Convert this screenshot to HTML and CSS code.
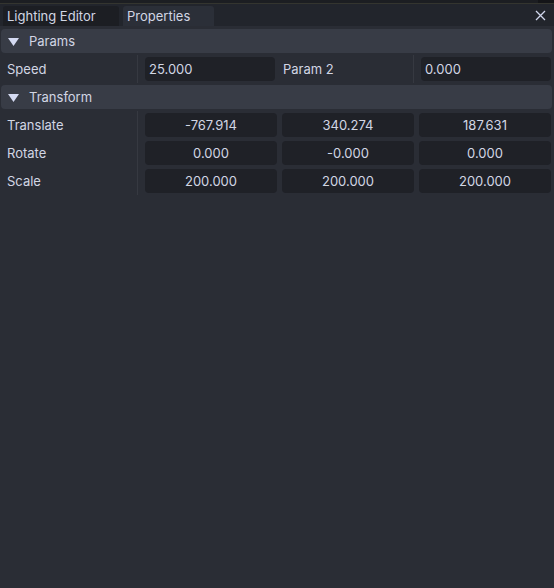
FILE: index.html
```html
<!DOCTYPE html>
<html>
<head>
<meta charset="utf-8">
<link rel="stylesheet" href="styles.css">
</head>
<body>
<div class="window">
  <div class="topstrip"><div class="topblock"></div></div>
  <div class="tabbar">
    <div class="tab tab-inactive">Lighting Editor</div>
    <div class="tab tab-active">Properties</div>
    <div class="close">
      <svg width="11" height="11" viewBox="0 0 11 11"><path d="M1 1 L10 10 M10 1 L1 10" stroke="#d0d6ec" stroke-width="1.3" fill="none"/></svg>
    </div>
  </div>
  <div class="content">
    <div class="header">
      <svg class="tri" width="11" height="8" viewBox="0 0 11 8"><polygon points="0,0 11,0 5.5,8" fill="#d4daf2"/></svg>
      <span>Params</span>
    </div>
    <div class="group">
      <div class="row">
        <div class="label">Speed</div>
        <div class="input input-left input-speed">25.000</div>
        <div class="label label2">Param 2</div>
        <div class="input input-left input-fill">0.000</div>
      </div>
    </div>
    <div class="header">
      <svg class="tri" width="11" height="8" viewBox="0 0 11 8"><polygon points="0,0 11,0 5.5,8" fill="#d4daf2"/></svg>
      <span>Transform</span>
    </div>
    <div class="group">
      <div class="row">
        <div class="label">Translate</div>
        <div class="triple">
          <div class="input">-767.914</div>
          <div class="input">340.274</div>
          <div class="input">187.631</div>
        </div>
      </div>
      <div class="row">
        <div class="label">Rotate</div>
        <div class="triple">
          <div class="input">0.000</div>
          <div class="input">-0.000</div>
          <div class="input">0.000</div>
        </div>
      </div>
      <div class="row">
        <div class="label">Scale</div>
        <div class="triple">
          <div class="input">200.000</div>
          <div class="input">200.000</div>
          <div class="input">200.000</div>
        </div>
      </div>
    </div>
  </div>
</div>
</body>
</html>
```
FILE: styles.css
```css
html, body {
  margin: 0;
  padding: 0;
  height: 100%;
}
body {
  background: #2a2d35;
  font-family: Inter, "Noto Sans", sans-serif;
  font-size: 13px;
  color: #d2d6e4;
}
.window {
  display: flex;
  flex-direction: column;
  height: 100%;
}
.topstrip {
  height: 3px;
  background: #1c1e22;
  border-bottom: 1px solid #34352f;
  display: flex;
  justify-content: flex-end;
}
.topblock {
  width: 16px;
  background: #141518;
}
.tabbar {
  height: 22px;
  background: #22252c;
  display: flex;
  align-items: flex-end;
  padding-left: 3px;
  gap: 4px;
}
.tab {
  height: 20px;
  line-height: 20px;
  padding-left: 4px;
  box-sizing: border-box;
  border-radius: 3px 3px 0 0;
  white-space: nowrap;
}
.tab-inactive {
  width: 116px;
  background: #1c1e23;
}
.tab-active {
  width: 91px;
  background: #2b2f38;
}
.close {
  margin-left: auto;
  margin-right: 8px;
  align-self: center;
  height: 11px;
  width: 11px;
  margin-top: 1px;
}
.close svg {
  display: block;
}
.content {
  padding: 3px 2px 0 1px;
  display: flex;
  flex-direction: column;
}
.header {
  height: 24px;
  background: #383c46;
  border-radius: 4px;
  display: flex;
  align-items: center;
  padding-left: 7px;
}
.tri {
  display: block;
  margin-right: 10px;
  margin-top: 1px;
}
.group {
  padding: 2px 0;
}
.row {
  height: 28px;
  display: flex;
  align-items: center;
  padding-right: 1px;
}
.label {
  width: 137px;
  box-sizing: border-box;
  height: 100%;
  display: flex;
  align-items: center;
  padding-left: 6px;
  border-right: 1px solid #363941;
  flex-shrink: 0;
}
.label2 {
  width: 138px;
  padding-left: 7px;
  margin-left: 1px;
}
.input {
  height: 24px;
  line-height: 24px;
  background: #1f2127;
  border-radius: 4px;
  text-align: center;
  box-sizing: border-box;
}
.input-left {
  text-align: left;
  padding-left: 4px;
}
.input-speed {
  width: 130px;
  margin-left: 7px;
}
.input-fill {
  flex: 1;
  margin-left: 7px;
}
.triple {
  flex: 1;
  display: flex;
  gap: 5px;
  margin-left: 7px;
}
.triple .input {
  flex: 1;
}
```
